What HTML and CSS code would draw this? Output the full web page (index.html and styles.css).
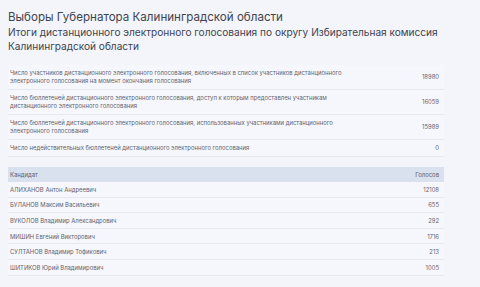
FILE: index.html
```html
<!DOCTYPE html>
<html lang="ru">
<head>
<meta charset="utf-8">
<link rel="stylesheet" href="styles.css">
</head>
<body>
<div class="page">
  <h1 class="title">Выборы Губернатора Калининградской области</h1>
  <h2 class="subtitle">Итоги дистанционного электронного голосования по округу Избирательная комиссия Калининградской области</h2>

  <table class="stats">
    <tr><td class="label">Число участников дистанционного электронного голосования, включенных в список участников дистанционного электронного голосования на момент окончания голосования</td><td class="num">18980</td></tr>
    <tr><td class="label">Число бюллетеней дистанционного электронного голосования, доступ к которым предоставлен участникам дистанционного электронного голосования</td><td class="num">16059</td></tr>
    <tr><td class="label">Число бюллетеней дистанционного электронного голосования, использованных участниками дистанционного электронного голосования</td><td class="num">15989</td></tr>
    <tr><td class="label">Число недействительных бюллетеней дистанционного электронного голосования</td><td class="num">0</td></tr>
  </table>

  <table class="cands">
    <thead>
      <tr><th class="label">Кандидат</th><th class="num">Голосов</th></tr>
    </thead>
    <tbody>
      <tr><td class="label">АЛИХАНОВ Антон Андреевич</td><td class="num">12108</td></tr>
      <tr><td class="label">БУЛАНОВ Максим Васильевич</td><td class="num">655</td></tr>
      <tr><td class="label">ВУКОЛОВ Владимир Александрович</td><td class="num">292</td></tr>
      <tr><td class="label">МИШИН Евгений Викторович</td><td class="num">1716</td></tr>
      <tr><td class="label">СУЛТАНОВ Владимир Тофикович</td><td class="num">213</td></tr>
      <tr><td class="label">ШИТИКОВ Юрий Владимирович</td><td class="num">1005</td></tr>
    </tbody>
  </table>
</div>
</body>
</html>
```

FILE: styles.css
```css
html, body {
  margin: 0;
  padding: 0;
  background: #f3f5fb;
}
body {
  font-family: Inter, Roboto, "Liberation Sans", sans-serif;
  color: #444a55;
}
.page {
  width: 436px;
  padding: 10px 8px 0 8px;
}
.title {
  margin: 0;
  font-size: 11.6px;
  font-weight: 400;
  line-height: 14px;
  color: #3f4450;
}
.subtitle {
  margin: 1px 0 0 0;
  font-size: 10.1px;
  font-weight: 400;
  line-height: 14px;
  color: #3f4450;
}
table {
  width: 436px;
  border-collapse: collapse;
  font-size: 5.9px;
  color: #5f6470;
}
.stats {
  margin-top: 12px;
}
.stats td {
  padding: 4px 5px 4px 2px;
  line-height: 8px;
  border-bottom: 1px solid #e6e9f2;
  background: #f6f7fc;
  vertical-align: middle;
}
.stats .label {
  width: 340px;
  padding-right: 60px;
}
.num {
  text-align: right;
}
.cands {
  margin-top: 10px;
}
.cands th {
  background: #d9e0ee;
  font-weight: 400;
  height: 15px;
  padding: 0 5px 0 2px;
  text-align: left;
  color: #5a6070;
}
.cands th.num {
  text-align: right;
}
.cands td {
  height: 14.6px;
  padding: 0 5px 0 2px;
  border-bottom: 1px solid #e6e9f2;
  background: #f6f7fc;
}
```
